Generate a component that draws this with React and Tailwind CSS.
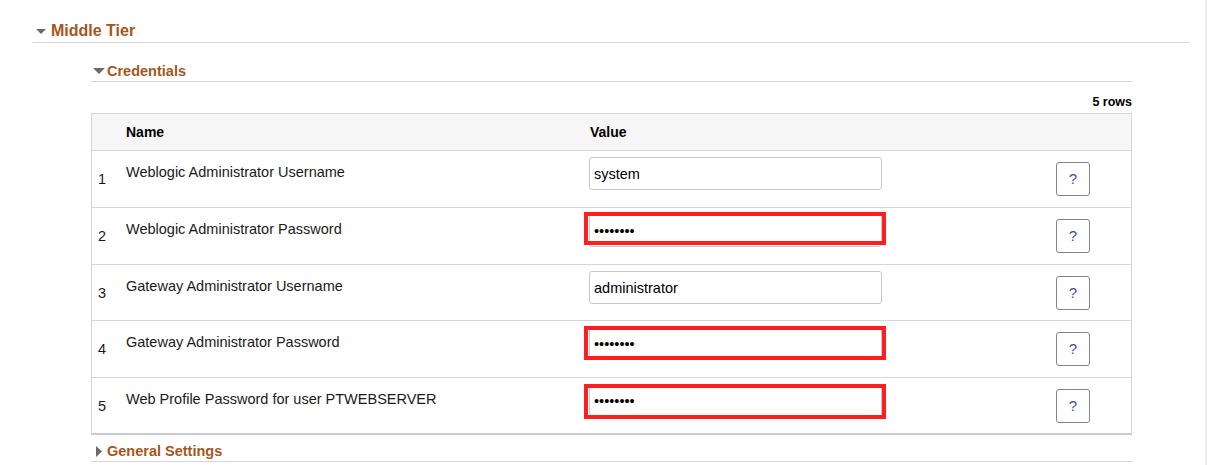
import React from "react";

const rows = [
	{ n: 1, label: "Weblogic Administrator Username", value: "system", pw: false, h: "h-[57px]" },
	{ n: 2, label: "Weblogic Administrator Password", value: "password", pw: true, h: "h-[57px]", red: "top-[-2px] h-[33px]" },
	{ n: 3, label: "Gateway Administrator Username", value: "administrator", pw: false, h: "h-[56px]" },
	{ n: 4, label: "Gateway Administrator Password", value: "password", pw: true, h: "h-[57px]", red: "top-[-1px] h-[34px]" },
	{ n: 5, label: "Web Profile Password for user PTWEBSERVER", value: "password", pw: true, h: "h-[56px]", red: "top-[0px] h-[35px]" },
];

const DownArrow = ({ w, h }) => (
	<svg width={w} height={h} viewBox={`0 0 ${w} ${h}`}>
		<polygon points={`0,0 ${w},0 ${w / 2},${h}`} fill="#6b6b6b" />
	</svg>
);

const RightArrow = () => (
	<svg width="6" height="11" viewBox="0 0 6 11">
		<polygon points="0,0 6,5.5 0,11" fill="#6b6b6b" />
	</svg>
);

const App = () => {
	return (
		<div className="w-[1208px] h-[465px] overflow-hidden bg-white font-['Liberation_Sans',Arial,sans-serif] text-[#1a1a1a]">
			<div className="w-[1207px] h-[465px] border-r-2 border-[#ececec]">
				<section className="ml-[33px] w-[1157px] pt-[22px]">
					<div className="flex items-center h-[18px] border-b border-[#d2d5d9] box-content pb-[2px]">
						<div className="ml-[3px] flex items-center">
							<DownArrow w={10} h={5} />
						</div>
						<h2 className="ml-[5px] text-[16px] leading-[18px] font-bold text-[#a4561c]">
							Middle Tier
						</h2>
					</div>

					<div className="ml-[58px] w-[1041px] mt-[20px]">
						<div className="flex items-center h-[16px] border-b border-[#d2d5d9] box-content pb-[2px]">
							<div className="ml-[2px] flex items-center">
								<DownArrow w={12} h={6} />
							</div>
							<h3 className="ml-[2px] text-[14.5px] leading-[16px] font-bold text-[#a4561c]">
								Credentials
							</h3>
						</div>

						<div className="mt-[13px] text-right text-[12.5px] leading-[14px] font-bold text-black">
							5 rows
						</div>

						<div className="mt-[4px] border border-b-2 border-[#d2d5d9] border-b-[#c8ccd1]">
							<div className="flex items-center h-[36px] bg-[#f6f6f6] text-[14px] font-bold text-black">
								<div className="w-[34px]" />
								<div className="w-[463px]">Name</div>
								<div className="w-[467px] pl-[1px]">Value</div>
							</div>

							{rows.map((row) => (
								<div
									key={row.n}
									className={`flex items-start border-t border-[#d2d5d9] ${row.h}`}
								>
									<div className="w-[34px] pl-[6px] pt-[20px] text-[14.5px] leading-[17px]">
										{row.n}
									</div>
									<div className="w-[463px] pt-[13px] text-[14.5px] leading-[17px]">
										{row.label}
									</div>
									<div className="w-[467px] mt-[6px]">
										<div className="relative w-[293px]">
											<input
												readOnly
												type={row.pw ? "password" : "text"}
												defaultValue={row.value}
												className="block w-[293px] h-[33px] border border-[#c4c9cf] rounded-[3px] px-[4px] text-[14.5px] text-black bg-white outline-none"
											/>
											{row.red && (
												<div
													className={`absolute left-[-5px] w-[302px] border-[4px] border-[#ff1f1f] ${row.red}`}
												/>
											)}
										</div>
									</div>
									<button className="mt-[11px] w-[34px] h-[34px] border border-[#7d8694] rounded-[3px] bg-white text-[15px] text-[#3d50a3] flex items-center justify-center">
										?
									</button>
								</div>
							))}
						</div>

						<div className="mt-[8px] flex items-center h-[17px] border-b border-[#d2d5d9] box-content pb-[1px]">
							<div className="ml-[5px] flex items-center">
								<RightArrow />
							</div>
							<h3 className="ml-[5px] text-[14.5px] leading-[17px] font-bold text-[#a4561c]">
								General Settings
							</h3>
						</div>
					</div>
				</section>
			</div>
		</div>
	);
};

export default App;
